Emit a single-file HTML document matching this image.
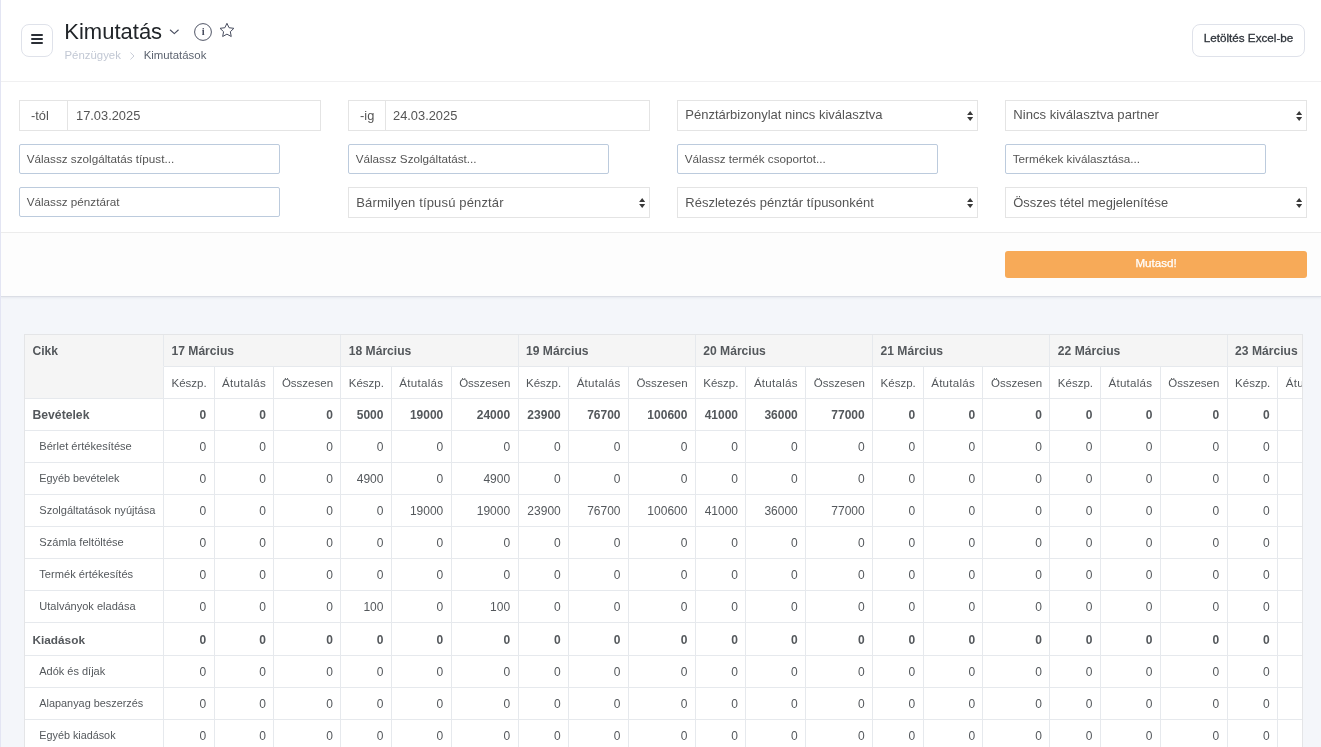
<!DOCTYPE html>
<html lang="hu">
<head>
<meta charset="utf-8">
<title>Kimutatás</title>
<style>
*{box-sizing:border-box;}
html,body{margin:0;padding:0;}
body{width:1321px;height:747px;overflow:hidden;background:#f4f6fa;font-family:"Liberation Sans",sans-serif;position:relative;color:#555;}
.leftbar{position:absolute;left:0;top:0;width:1px;height:747px;background:#e3e5f3;z-index:10;}
.header{position:absolute;left:1px;top:0;width:1320px;height:82px;background:#fff;border-bottom:1px solid #f0f0f1;}
.menu{position:absolute;left:20px;top:24px;width:32px;height:33px;border:1px solid #dfe2ea;border-radius:8px;background:#fff;}
.menu i{position:absolute;left:9.3px;width:11.5px;height:1.9px;background:#2b2f36;border-radius:1px;}
.title{position:absolute;left:63.3px;top:17.5px;font-size:22px;line-height:28px;color:#212529;white-space:nowrap;}
.crumb{position:absolute;left:63.5px;top:48px;font-size:11.4px;line-height:14px;white-space:nowrap;color:#c2c8d4;}
.crumb b{font-weight:normal;color:#5d6470;}
.excel{position:absolute;left:1191px;top:24px;width:113px;height:33px;border:1px solid #dfe2ea;border-radius:8px;background:#fff;font-size:11.7px;line-height:25px;text-align:center;color:#2f343b;-webkit-text-stroke:0.3px #2f343b;}
.filters{position:absolute;left:1px;top:82px;width:1320px;height:151px;background:#fff;border-bottom:1px solid #ececec;}
.ffoot{position:absolute;left:1px;top:233px;width:1320px;height:63px;background:#fdfdfd;box-shadow:0 1px 0 #dbdee5, 0 2px 2px rgba(40,50,80,0.07);}
.grp{position:absolute;height:31px;border:1px solid #e4e4e4;background:#fff;font-size:12.85px;line-height:29px;color:#555;}
.grp .add{position:absolute;left:0;top:0;height:29px;border-right:1px solid #e4e4e4;text-align:left;padding-left:11px;}
.grp .val{position:absolute;top:0;}
.sel{position:absolute;height:31px;width:302px;border:1px solid #e4e4e4;background:#fff;font-size:13.35px;line-height:27px;color:#555;padding-left:7.3px;white-space:nowrap;}
.sel svg{position:absolute;right:3.7px;top:9.6px;}
.inp{position:absolute;height:30px;width:261px;border:1px solid #bccbdd;border-radius:2px;background:#fff;font-size:11.7px;line-height:28px;color:#555;padding-left:6.7px;white-space:nowrap;}
.go{position:absolute;left:1005px;top:251px;width:302px;height:27px;background:#f7aa58;border-radius:3px;color:#fff;font-size:11.6px;line-height:24px;text-align:center;-webkit-text-stroke:0.25px #fff;}
.tblwrap{position:absolute;left:24px;top:334px;width:1279px;height:420px;overflow:hidden;border-right:1px solid #e4e5e7;}
.tbl{width:1420px;border-top:1px solid #e4e5e7;border-left:1px solid #e4e5e7;font-size:12px;color:#54585c;}
.tr{display:flex;height:32px;line-height:32px;}
.c{flex:none;height:100%;border-right:1px solid #e6e9ed;border-bottom:1px solid #e6e9ed;background:#fff;padding:0 8px 0 7.5px;line-height:inherit;white-space:nowrap;overflow:hidden;}
.h1 .c{background:#f5f5f5;font-weight:bold;color:#54585c;font-size:12.1px;}
.h1 .cikk{border-bottom-color:#f5f5f5;}
.h2 .cikk2{background:#f5f5f5;}
.num{text-align:right;padding-right:7.4px;}
.name{padding-left:14.3px;}
.b .c{font-weight:bold;}
.b .name{padding-left:7.5px;}
</style>
</head>
<body>
<div id="root" style="position:absolute;left:0;top:0;width:1321px;height:747px;will-change:transform;">
<div class="leftbar"></div>
<div class="header">
  <div class="menu"><i style="top:9.4px"></i><i style="top:13.3px"></i><i style="top:17.2px"></i></div>
  <div class="title">Kimutatás</div>
  <svg style="position:absolute;left:168.3px;top:27.7px" width="11" height="8" viewBox="0 0 11 8"><path d="M1.3 2 L5.3 5.7 L9.3 2" fill="none" stroke="#474c5e" stroke-width="1.05" stroke-linecap="round" stroke-linejoin="round"/></svg>
  <svg style="position:absolute;left:192px;top:22px" width="20" height="20" viewBox="0 0 20 20"><circle cx="10" cy="10" r="8.4" fill="none" stroke="#474c5e" stroke-width="0.95"/><text x="10.1" y="13" font-family="Liberation Serif" font-size="10.5" font-weight="bold" text-anchor="middle" fill="#474c5e">i</text></svg>
  <svg style="position:absolute;left:216.7px;top:21px" width="19" height="19" viewBox="0 0 19 19"><path d="M8.95 2.30 L11.04 6.73 L15.89 7.34 L12.33 10.70 L13.24 15.51 L8.95 13.15 L4.66 15.51 L5.57 10.70 L2.01 7.34 L6.86 6.73 Z" fill="none" stroke="#474c5e" stroke-width="1" stroke-linejoin="round"/></svg>
  <div class="crumb">Pénzügyek<svg style="margin:0 8.3px 0 9.5px;vertical-align:-0.5px" width="5" height="8" viewBox="0 0 5 8"><path d="M0.7 0.8 L4 4 L0.7 7.2" fill="none" stroke="#c9cdd8" stroke-width="1" stroke-linecap="round" stroke-linejoin="round"/></svg><b>Kimutatások</b></div>
  <div class="excel">Letöltés Excel-be</div>
</div>
<div class="filters"></div>
<div class="ffoot"></div>

<div class="grp" style="left:19px;top:100px;width:302px"><div class="add" style="width:48px">-tól</div><div class="val" style="left:56px">17.03.2025</div></div>
<div class="grp" style="left:348px;top:100px;width:302px"><div class="add" style="width:37px">-ig</div><div class="val" style="left:44px">24.03.2025</div></div>
<div class="sel" style="left:677px;top:100px;width:301px;font-size:13px">Pénztárbizonylat nincs kiválasztva<svg width="6.4" height="10" viewBox="0 0 6.4 10"><path d="M3.2 0 L6.3 4.1 L0.1 4.1 Z M3.2 10 L6.3 5.9 L0.1 5.9 Z" fill="#3a3a3a"/></svg></div>
<div class="sel" style="left:1005px;top:100px;font-size:13.1px">Nincs kiválasztva partner<svg width="6.4" height="10" viewBox="0 0 6.4 10"><path d="M3.2 0 L6.3 4.1 L0.1 4.1 Z M3.2 10 L6.3 5.9 L0.1 5.9 Z" fill="#3a3a3a"/></svg></div>

<div class="inp" style="left:19px;top:144px">Válassz szolgáltatás típust...</div>
<div class="inp" style="left:348px;top:144px">Válassz Szolgáltatást...</div>
<div class="inp" style="left:677px;top:144px">Válassz termék csoportot...</div>
<div class="inp" style="left:1005px;top:144px">Termékek kiválasztása...</div>

<div class="inp" style="left:19px;top:187px">Válassz pénztárat</div>
<div class="sel" style="left:348px;top:187px;font-size:13px;letter-spacing:0.15px;line-height:29px">Bármilyen típusú pénztár<svg width="6.4" height="10" viewBox="0 0 6.4 10"><path d="M3.2 0 L6.3 4.1 L0.1 4.1 Z M3.2 10 L6.3 5.9 L0.1 5.9 Z" fill="#3a3a3a"/></svg></div>
<div class="sel" style="left:677px;top:187px;width:301px;font-size:13px;line-height:29px">Részletezés pénztár típusonként<svg width="6.4" height="10" viewBox="0 0 6.4 10"><path d="M3.2 0 L6.3 4.1 L0.1 4.1 Z M3.2 10 L6.3 5.9 L0.1 5.9 Z" fill="#3a3a3a"/></svg></div>
<div class="sel" style="left:1005px;top:187px;font-size:12.9px;line-height:29px">Összes tétel megjelenítése<svg width="6.4" height="10" viewBox="0 0 6.4 10"><path d="M3.2 0 L6.3 4.1 L0.1 4.1 Z M3.2 10 L6.3 5.9 L0.1 5.9 Z" fill="#3a3a3a"/></svg></div>

<div class="go">Mutasd!</div>

<div class="tblwrap">
<div class="tbl">
<div class="tr h1" style="height:32px">
<div class="c cikk" style="width:139.00px">Cikk</div>
<div class="c day" style="width:177.28px">17 Március</div>
<div class="c day" style="width:177.28px">18 Március</div>
<div class="c day" style="width:177.28px">19 Március</div>
<div class="c day" style="width:177.28px">20 Március</div>
<div class="c day" style="width:177.28px">21 Március</div>
<div class="c day" style="width:177.28px">22 Március</div>
<div class="c day" style="width:177.28px">23 Március</div>
</div>
<div class="tr h2" style="height:32px">
<div class="c cikk2" style="width:139.00px"></div>
<div class="c sub" style="width:50.60px;font-size:11.5px">Készp.</div>
<div class="c sub" style="width:59.80px;font-size:11.6px;letter-spacing:0.25px">Átutalás</div>
<div class="c sub" style="width:66.88px;font-size:11.5px">Összesen</div>
<div class="c sub" style="width:50.60px;font-size:11.5px">Készp.</div>
<div class="c sub" style="width:59.80px;font-size:11.6px;letter-spacing:0.25px">Átutalás</div>
<div class="c sub" style="width:66.88px;font-size:11.5px">Összesen</div>
<div class="c sub" style="width:50.60px;font-size:11.5px">Készp.</div>
<div class="c sub" style="width:59.80px;font-size:11.6px;letter-spacing:0.25px">Átutalás</div>
<div class="c sub" style="width:66.88px;font-size:11.5px">Összesen</div>
<div class="c sub" style="width:50.60px;font-size:11.5px">Készp.</div>
<div class="c sub" style="width:59.80px;font-size:11.6px;letter-spacing:0.25px">Átutalás</div>
<div class="c sub" style="width:66.88px;font-size:11.5px">Összesen</div>
<div class="c sub" style="width:50.60px;font-size:11.5px">Készp.</div>
<div class="c sub" style="width:59.80px;font-size:11.6px;letter-spacing:0.25px">Átutalás</div>
<div class="c sub" style="width:66.88px;font-size:11.5px">Összesen</div>
<div class="c sub" style="width:50.60px;font-size:11.5px">Készp.</div>
<div class="c sub" style="width:59.80px;font-size:11.6px;letter-spacing:0.25px">Átutalás</div>
<div class="c sub" style="width:66.88px;font-size:11.5px">Összesen</div>
<div class="c sub" style="width:50.60px;font-size:11.5px">Készp.</div>
<div class="c sub" style="width:59.80px;font-size:11.6px;letter-spacing:0.25px">Átutalás</div>
<div class="c sub" style="width:66.88px;font-size:11.5px">Összesen</div>
</div>
<div class="tr b" style="height:32px;line-height:32px">
<div class="c name" style="width:139.00px;font-size:12.2px">Bevételek</div>
<div class="c num" style="width:50.60px">0</div>
<div class="c num" style="width:59.80px">0</div>
<div class="c num" style="width:66.88px">0</div>
<div class="c num" style="width:50.60px">5000</div>
<div class="c num" style="width:59.80px">19000</div>
<div class="c num" style="width:66.88px">24000</div>
<div class="c num" style="width:50.60px">23900</div>
<div class="c num" style="width:59.80px">76700</div>
<div class="c num" style="width:66.88px">100600</div>
<div class="c num" style="width:50.60px">41000</div>
<div class="c num" style="width:59.80px">36000</div>
<div class="c num" style="width:66.88px">77000</div>
<div class="c num" style="width:50.60px">0</div>
<div class="c num" style="width:59.80px">0</div>
<div class="c num" style="width:66.88px">0</div>
<div class="c num" style="width:50.60px">0</div>
<div class="c num" style="width:59.80px">0</div>
<div class="c num" style="width:66.88px">0</div>
<div class="c num" style="width:50.60px">0</div>
<div class="c num" style="width:59.80px">0</div>
<div class="c num" style="width:66.88px">0</div>
</div>
<div class="tr" style="height:32px;line-height:32px">
<div class="c name" style="width:139.00px;font-size:11.1px;line-height:30px">Bérlet értékesítése</div>
<div class="c num" style="width:50.60px">0</div>
<div class="c num" style="width:59.80px">0</div>
<div class="c num" style="width:66.88px">0</div>
<div class="c num" style="width:50.60px">0</div>
<div class="c num" style="width:59.80px">0</div>
<div class="c num" style="width:66.88px">0</div>
<div class="c num" style="width:50.60px">0</div>
<div class="c num" style="width:59.80px">0</div>
<div class="c num" style="width:66.88px">0</div>
<div class="c num" style="width:50.60px">0</div>
<div class="c num" style="width:59.80px">0</div>
<div class="c num" style="width:66.88px">0</div>
<div class="c num" style="width:50.60px">0</div>
<div class="c num" style="width:59.80px">0</div>
<div class="c num" style="width:66.88px">0</div>
<div class="c num" style="width:50.60px">0</div>
<div class="c num" style="width:59.80px">0</div>
<div class="c num" style="width:66.88px">0</div>
<div class="c num" style="width:50.60px">0</div>
<div class="c num" style="width:59.80px">0</div>
<div class="c num" style="width:66.88px">0</div>
</div>
<div class="tr" style="height:32px;line-height:32px">
<div class="c name" style="width:139.00px;font-size:10.85px;line-height:30px">Egyéb bevételek</div>
<div class="c num" style="width:50.60px">0</div>
<div class="c num" style="width:59.80px">0</div>
<div class="c num" style="width:66.88px">0</div>
<div class="c num" style="width:50.60px">4900</div>
<div class="c num" style="width:59.80px">0</div>
<div class="c num" style="width:66.88px">4900</div>
<div class="c num" style="width:50.60px">0</div>
<div class="c num" style="width:59.80px">0</div>
<div class="c num" style="width:66.88px">0</div>
<div class="c num" style="width:50.60px">0</div>
<div class="c num" style="width:59.80px">0</div>
<div class="c num" style="width:66.88px">0</div>
<div class="c num" style="width:50.60px">0</div>
<div class="c num" style="width:59.80px">0</div>
<div class="c num" style="width:66.88px">0</div>
<div class="c num" style="width:50.60px">0</div>
<div class="c num" style="width:59.80px">0</div>
<div class="c num" style="width:66.88px">0</div>
<div class="c num" style="width:50.60px">0</div>
<div class="c num" style="width:59.80px">0</div>
<div class="c num" style="width:66.88px">0</div>
</div>
<div class="tr" style="height:32px;line-height:32px">
<div class="c name" style="width:139.00px;font-size:11.05px;line-height:30px">Szolgáltatások nyújtása</div>
<div class="c num" style="width:50.60px">0</div>
<div class="c num" style="width:59.80px">0</div>
<div class="c num" style="width:66.88px">0</div>
<div class="c num" style="width:50.60px">0</div>
<div class="c num" style="width:59.80px">19000</div>
<div class="c num" style="width:66.88px">19000</div>
<div class="c num" style="width:50.60px">23900</div>
<div class="c num" style="width:59.80px">76700</div>
<div class="c num" style="width:66.88px">100600</div>
<div class="c num" style="width:50.60px">41000</div>
<div class="c num" style="width:59.80px">36000</div>
<div class="c num" style="width:66.88px">77000</div>
<div class="c num" style="width:50.60px">0</div>
<div class="c num" style="width:59.80px">0</div>
<div class="c num" style="width:66.88px">0</div>
<div class="c num" style="width:50.60px">0</div>
<div class="c num" style="width:59.80px">0</div>
<div class="c num" style="width:66.88px">0</div>
<div class="c num" style="width:50.60px">0</div>
<div class="c num" style="width:59.80px">0</div>
<div class="c num" style="width:66.88px">0</div>
</div>
<div class="tr" style="height:32px;line-height:32px">
<div class="c name" style="width:139.00px;font-size:11.1px;line-height:30px">Számla feltöltése</div>
<div class="c num" style="width:50.60px">0</div>
<div class="c num" style="width:59.80px">0</div>
<div class="c num" style="width:66.88px">0</div>
<div class="c num" style="width:50.60px">0</div>
<div class="c num" style="width:59.80px">0</div>
<div class="c num" style="width:66.88px">0</div>
<div class="c num" style="width:50.60px">0</div>
<div class="c num" style="width:59.80px">0</div>
<div class="c num" style="width:66.88px">0</div>
<div class="c num" style="width:50.60px">0</div>
<div class="c num" style="width:59.80px">0</div>
<div class="c num" style="width:66.88px">0</div>
<div class="c num" style="width:50.60px">0</div>
<div class="c num" style="width:59.80px">0</div>
<div class="c num" style="width:66.88px">0</div>
<div class="c num" style="width:50.60px">0</div>
<div class="c num" style="width:59.80px">0</div>
<div class="c num" style="width:66.88px">0</div>
<div class="c num" style="width:50.60px">0</div>
<div class="c num" style="width:59.80px">0</div>
<div class="c num" style="width:66.88px">0</div>
</div>
<div class="tr" style="height:32px;line-height:32px">
<div class="c name" style="width:139.00px;font-size:11.12px;line-height:30px">Termék értékesítés</div>
<div class="c num" style="width:50.60px">0</div>
<div class="c num" style="width:59.80px">0</div>
<div class="c num" style="width:66.88px">0</div>
<div class="c num" style="width:50.60px">0</div>
<div class="c num" style="width:59.80px">0</div>
<div class="c num" style="width:66.88px">0</div>
<div class="c num" style="width:50.60px">0</div>
<div class="c num" style="width:59.80px">0</div>
<div class="c num" style="width:66.88px">0</div>
<div class="c num" style="width:50.60px">0</div>
<div class="c num" style="width:59.80px">0</div>
<div class="c num" style="width:66.88px">0</div>
<div class="c num" style="width:50.60px">0</div>
<div class="c num" style="width:59.80px">0</div>
<div class="c num" style="width:66.88px">0</div>
<div class="c num" style="width:50.60px">0</div>
<div class="c num" style="width:59.80px">0</div>
<div class="c num" style="width:66.88px">0</div>
<div class="c num" style="width:50.60px">0</div>
<div class="c num" style="width:59.80px">0</div>
<div class="c num" style="width:66.88px">0</div>
</div>
<div class="tr" style="height:32px;line-height:32px">
<div class="c name" style="width:139.00px;font-size:11.04px;line-height:30px">Utalványok eladása</div>
<div class="c num" style="width:50.60px">0</div>
<div class="c num" style="width:59.80px">0</div>
<div class="c num" style="width:66.88px">0</div>
<div class="c num" style="width:50.60px">100</div>
<div class="c num" style="width:59.80px">0</div>
<div class="c num" style="width:66.88px">100</div>
<div class="c num" style="width:50.60px">0</div>
<div class="c num" style="width:59.80px">0</div>
<div class="c num" style="width:66.88px">0</div>
<div class="c num" style="width:50.60px">0</div>
<div class="c num" style="width:59.80px">0</div>
<div class="c num" style="width:66.88px">0</div>
<div class="c num" style="width:50.60px">0</div>
<div class="c num" style="width:59.80px">0</div>
<div class="c num" style="width:66.88px">0</div>
<div class="c num" style="width:50.60px">0</div>
<div class="c num" style="width:59.80px">0</div>
<div class="c num" style="width:66.88px">0</div>
<div class="c num" style="width:50.60px">0</div>
<div class="c num" style="width:59.80px">0</div>
<div class="c num" style="width:66.88px">0</div>
</div>
<div class="tr b" style="height:33px;line-height:35px">
<div class="c name" style="width:139.00px;font-size:11.8px">Kiadások</div>
<div class="c num" style="width:50.60px">0</div>
<div class="c num" style="width:59.80px">0</div>
<div class="c num" style="width:66.88px">0</div>
<div class="c num" style="width:50.60px">0</div>
<div class="c num" style="width:59.80px">0</div>
<div class="c num" style="width:66.88px">0</div>
<div class="c num" style="width:50.60px">0</div>
<div class="c num" style="width:59.80px">0</div>
<div class="c num" style="width:66.88px">0</div>
<div class="c num" style="width:50.60px">0</div>
<div class="c num" style="width:59.80px">0</div>
<div class="c num" style="width:66.88px">0</div>
<div class="c num" style="width:50.60px">0</div>
<div class="c num" style="width:59.80px">0</div>
<div class="c num" style="width:66.88px">0</div>
<div class="c num" style="width:50.60px">0</div>
<div class="c num" style="width:59.80px">0</div>
<div class="c num" style="width:66.88px">0</div>
<div class="c num" style="width:50.60px">0</div>
<div class="c num" style="width:59.80px">0</div>
<div class="c num" style="width:66.88px">0</div>
</div>
<div class="tr" style="height:32px;line-height:32px">
<div class="c name" style="width:139.00px;font-size:10.98px;line-height:30px">Adók és díjak</div>
<div class="c num" style="width:50.60px">0</div>
<div class="c num" style="width:59.80px">0</div>
<div class="c num" style="width:66.88px">0</div>
<div class="c num" style="width:50.60px">0</div>
<div class="c num" style="width:59.80px">0</div>
<div class="c num" style="width:66.88px">0</div>
<div class="c num" style="width:50.60px">0</div>
<div class="c num" style="width:59.80px">0</div>
<div class="c num" style="width:66.88px">0</div>
<div class="c num" style="width:50.60px">0</div>
<div class="c num" style="width:59.80px">0</div>
<div class="c num" style="width:66.88px">0</div>
<div class="c num" style="width:50.60px">0</div>
<div class="c num" style="width:59.80px">0</div>
<div class="c num" style="width:66.88px">0</div>
<div class="c num" style="width:50.60px">0</div>
<div class="c num" style="width:59.80px">0</div>
<div class="c num" style="width:66.88px">0</div>
<div class="c num" style="width:50.60px">0</div>
<div class="c num" style="width:59.80px">0</div>
<div class="c num" style="width:66.88px">0</div>
</div>
<div class="tr" style="height:32px;line-height:32px">
<div class="c name" style="width:139.00px;font-size:10.88px;line-height:30px">Alapanyag beszerzés</div>
<div class="c num" style="width:50.60px">0</div>
<div class="c num" style="width:59.80px">0</div>
<div class="c num" style="width:66.88px">0</div>
<div class="c num" style="width:50.60px">0</div>
<div class="c num" style="width:59.80px">0</div>
<div class="c num" style="width:66.88px">0</div>
<div class="c num" style="width:50.60px">0</div>
<div class="c num" style="width:59.80px">0</div>
<div class="c num" style="width:66.88px">0</div>
<div class="c num" style="width:50.60px">0</div>
<div class="c num" style="width:59.80px">0</div>
<div class="c num" style="width:66.88px">0</div>
<div class="c num" style="width:50.60px">0</div>
<div class="c num" style="width:59.80px">0</div>
<div class="c num" style="width:66.88px">0</div>
<div class="c num" style="width:50.60px">0</div>
<div class="c num" style="width:59.80px">0</div>
<div class="c num" style="width:66.88px">0</div>
<div class="c num" style="width:50.60px">0</div>
<div class="c num" style="width:59.80px">0</div>
<div class="c num" style="width:66.88px">0</div>
</div>
<div class="tr" style="height:32px;line-height:32px">
<div class="c name" style="width:139.00px;font-size:10.81px;line-height:30px">Egyéb kiadások</div>
<div class="c num" style="width:50.60px">0</div>
<div class="c num" style="width:59.80px">0</div>
<div class="c num" style="width:66.88px">0</div>
<div class="c num" style="width:50.60px">0</div>
<div class="c num" style="width:59.80px">0</div>
<div class="c num" style="width:66.88px">0</div>
<div class="c num" style="width:50.60px">0</div>
<div class="c num" style="width:59.80px">0</div>
<div class="c num" style="width:66.88px">0</div>
<div class="c num" style="width:50.60px">0</div>
<div class="c num" style="width:59.80px">0</div>
<div class="c num" style="width:66.88px">0</div>
<div class="c num" style="width:50.60px">0</div>
<div class="c num" style="width:59.80px">0</div>
<div class="c num" style="width:66.88px">0</div>
<div class="c num" style="width:50.60px">0</div>
<div class="c num" style="width:59.80px">0</div>
<div class="c num" style="width:66.88px">0</div>
<div class="c num" style="width:50.60px">0</div>
<div class="c num" style="width:59.80px">0</div>
<div class="c num" style="width:66.88px">0</div>
</div>
</div>
</div>
</div>
</body>
</html>
